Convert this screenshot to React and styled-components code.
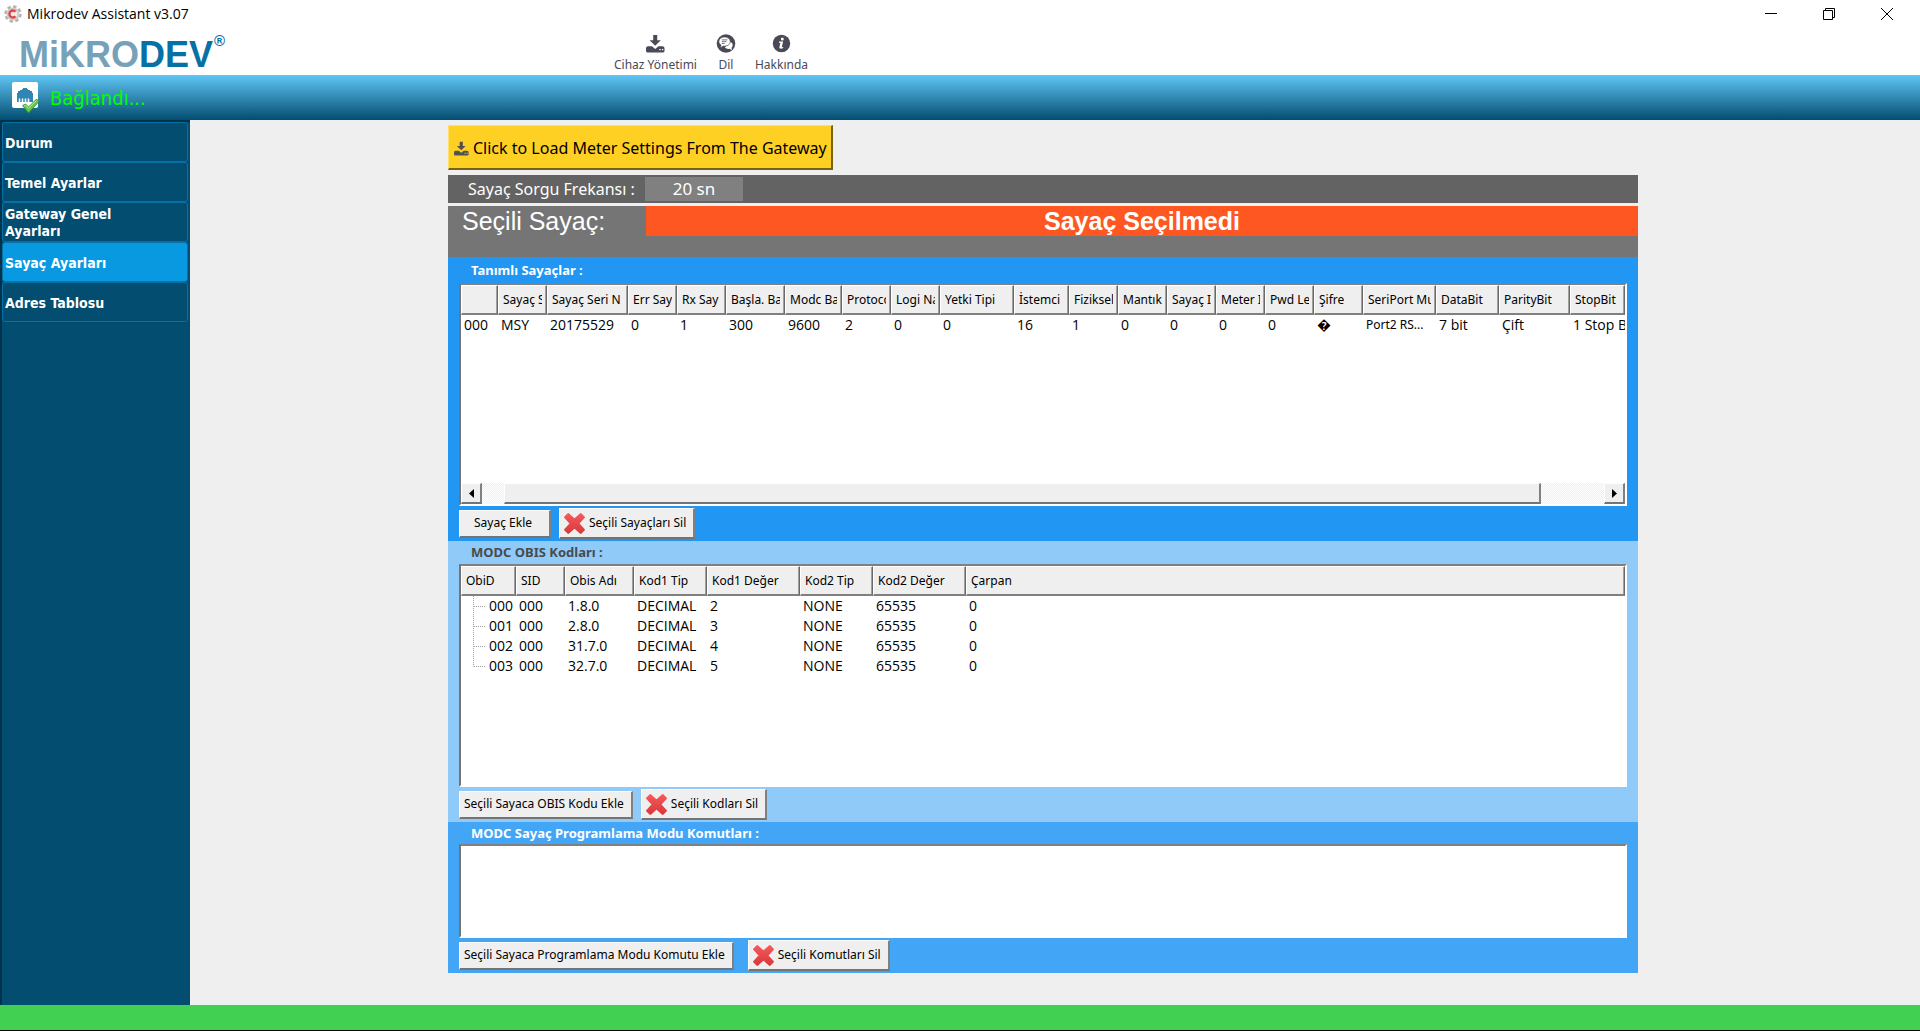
import React from "react";
import styled, { createGlobalStyle, css } from "styled-components";

const tahoma = `"DejaVu Sans Condensed", "DejaVu Sans", sans-serif`;
const noto = `"Noto Sans", "Open Sans", sans-serif`;
const segoe = `"Open Sans", "Noto Sans", sans-serif`;
const arial = `"Liberation Sans", Arial, sans-serif`;

const GlobalStyle = createGlobalStyle`
  *, *::before, *::after { box-sizing: border-box; }
  body { margin: 0; background: #efefef; font-family: ${tahoma}; }
  button, input { font: inherit; color: inherit; margin: 0; }
`;

const Window = styled.div`
  display: flex;
  flex-direction: column;
  min-height: 100vh;
`;

/* Title bar */
const TitleBar = styled.div`
  display: flex;
  align-items: center;
  height: 28px;
  padding: 0 4px;
  gap: 5px;
  background: #fff;
  color: #000;
  font: 14px/20px ${segoe};
`;
const WindowTitle = styled.span`
  flex: 1;
`;
const WindowControls = styled.div`
  display: flex;
`;
const WindowButton = styled.button`
  display: flex;
  align-items: center;
  justify-content: center;
  width: 58px;
  height: 28px;
  padding: 0;
  border: 0;
  background: none;
`;

/* Brand and toolbar */
const Header = styled.header`
  display: flex;
  align-items: flex-start;
  height: 47px;
  background: #fff;
`;
const Brand = styled.div`
  display: flex;
  width: 614px;
  padding: 7px 0 0 19px;
  font: bold 36px/40px ${arial};
  color: #76a1b9;
`;
const BrandStrong = styled.span`
  color: #0571a6;
`;
const BrandMark = styled.sup`
  padding-left: 1px;
  font: bold 15px/12px ${arial};
  color: #0571a6;
`;
const Toolbar = styled.nav`
  display: flex;
  gap: 19px;
  padding-top: 6px;
`;
const ToolButton = styled.button`
  display: flex;
  flex-direction: column;
  align-items: center;
  gap: 3px;
  padding: 0;
  border: 0;
  background: none;
  color: #4a4a57;
  font: 12px/18px ${noto};
`;

const StatusStrip = styled.div`
  display: flex;
  align-items: center;
  gap: 10px;
  height: 45px;
  padding: 1px 0 0 12px;
  background: linear-gradient(#60c6f5, #034d70);
  color: #00ff00;
  font: 20px/24px ${tahoma};
`;

/* Body */
const Body = styled.div`
  display: flex;
  flex: 1;
`;
const Sidebar = styled.nav`
  flex: none;
  width: 190px;
  padding-right: 2px;
  border: solid #02334c;
  border-width: 2px 0 0 2px;
  background: #034d70;
`;
const SideButton = styled.button`
  display: block;
  width: 100%;
  height: 40px;
  padding: 2px 72px 0 2px;
  border: 1px solid #0571a6;
  border-radius: 3px;
  background: ${(p) => (p.$active ? "#0899e0" : "#034d70")};
  color: #fff;
  font: bold 14px/17px ${tahoma};
  text-align: left;
`;
const Content = styled.main`
  flex: 1;
  min-width: 0;
  padding: 5px 282px 32px 258px;
`;
const Page = styled.div`
  display: flex;
  flex-direction: column;
`;
const LoadButton = styled.button`
  display: flex;
  align-self: flex-start;
  align-items: center;
  gap: 4px;
  height: 45px;
  padding: 2px 4px 0 5px;
  border: solid;
  border-width: 1px 2px 2px 1px;
  border-color: #ffe069 #7a6310 #7a6310 #ffe069;
  background: #ffd024;
  color: #000;
  white-space: nowrap;
  font: 16px/24px ${noto};
`;

const FrequencyBar = styled.div`
  display: flex;
  align-items: center;
  height: 28px;
  margin: 5px 0 3px;
  background: #636363;
  color: #fff;
  font: 16px/24px ${noto};
`;
const FrequencyLabel = styled.label`
  width: 197px;
  padding-left: 20px;
  white-space: nowrap;
`;
const FrequencyInput = styled.input`
  width: 98px;
  height: 24px;
  padding: 0;
  border: 0;
  background: #808080;
  text-align: center;
  font: 17px/24px ${noto};
`;
const SelectedBar = styled.div`
  display: flex;
  height: 51px;
  background: #757575;
  color: #fff;
  font: 25px/30px ${arial};
`;
const SelectedLabel = styled.label`
  width: 198px;
  padding-left: 14px;
`;
const SelectedValue = styled.output`
  flex: 1;
  height: 30px;
  background: #ff5722;
  font-weight: bold;
  text-align: center;
`;

/* Panels */
const Panel = styled.section`
  display: flex;
  flex-direction: column;
  padding: 0 11px 2px;
  background: ${(p) => p.$bg};
`;
const PanelTitle = styled.h2`
  margin: 0;
  padding: 0 12px;
  color: ${(p) => p.$color || "#fff"};
  font: bold 13px/${(p) => p.$height || 22}px ${noto};
`;
const Frame = styled.div`
  display: flex;
  flex-direction: column;
  height: ${(p) => p.$height}px;
  border: solid;
  border-width: 2px;
  border-color: #808080 #fff #fff #747474;
  background: #fff;
  overflow: hidden;
`;
const Spacer = styled.div`
  flex: 1;
`;
const Grid = styled.table`
  width: 100%;
  table-layout: fixed;
  border-collapse: separate;
  border-spacing: 0;
`;
const Col = styled.col`
  width: ${(p) => (p.$w ? p.$w + "px" : "auto")};
`;
const Head = styled.th`
  height: 30px;
  padding: 0 4px;
  border: solid;
  border-width: 1px 1px 2px 1px;
  border-color: #fff #696969 #808080 #fff;
  box-shadow: inset -1px 0 #a0a0a0;
  background: #efefef;
  text-align: left;
  font: 12px/20px ${noto};
`;
const Cell = styled.td`
  height: 20px;
  padding: 0 0 0 ${(p) => p.$pad || 3}px;
  font: 14px/20px ${segoe};
`;
const Clip = styled.span`
  display: block;
  overflow: hidden;
  white-space: nowrap;
`;
const SmallClip = styled(Clip)`
  font: 12px/20px ${noto};
`;
const TreeLabel = styled.span`
  display: flex;
  align-items: center;
  gap: 3px;
`;

const bevel = css`
  border: solid;
  border-width: 1px 2px 2px 1px;
  border-color: #fff #808080 #747474 #fff;
  background: #efefef;
`;
const ScrollBar = styled.div`
  display: grid;
  grid-template-columns: 21px 22px 1fr 63px 21px;
  height: 21px;
  background: repeating-conic-gradient(#efefef 0 25%, #fff 0 50%) 0 0 / 2px 2px;
`;
const ScrollButton = styled.button`
  ${bevel}
  display: flex;
  align-items: center;
  justify-content: center;
  padding: 0;
`;
const Thumb = styled.div`
  ${bevel}
`;

const Actions = styled.div`
  display: flex;
  align-items: center;
  gap: ${(p) => p.$gap}px;
  height: 33px;
  padding-top: 2px;
`;
const ActionButton = styled.button`
  ${bevel}
  display: flex;
  align-items: center;
  justify-content: center;
  gap: 4px;
  min-width: 92px;
  height: ${(p) => (p.$icon ? 31 : 28)}px;
  padding: 0 7px 0 4px;
  color: #000;
  white-space: nowrap;
  font: 12px/18px ${noto};
`;

const StatusBar = styled.footer`
  height: 26px;
  border-bottom: 1px solid #000;
  background: #42d052;
`;

const AppIcon = () => (
  <svg width="18" height="18" viewBox="0 0 18 18" aria-hidden="true">
    <circle cx="9" cy="9" r="7.4" fill="none" stroke="#b5b2ae" strokeWidth="2.6" strokeDasharray="3.4 2.4" />
    <circle cx="9" cy="9" r="6.6" fill="#cfcbc8" />
    <circle cx="9" cy="9" r="4.4" fill="#f7e9e7" />
    <path d="M11.500 6.600A3.500 3.500 0 1 0 11.500 11.400" fill="none" stroke="#e04545" strokeWidth="2.4" />
  </svg>
);

const DownloadIcon = ({ size = 19, color = "#4a4a57" }) => (
  <svg width={size} height={size} viewBox="0 0 19 19" fill={color} aria-hidden="true">
    <path d="M7.2 1h4v5.2h3.6L9.2 11.8 3.6 6.2h3.6z" />
    <path d="M2 12.3h4l3.2 2.6 3.2-2.6h4.1q2 0 2 2V17q0 1.4-1.4 1.4H1.4Q0 18.400 0 17v-2.7q0-2 2-2zm11.300 2.700v1.300h1.400V15zm2.600 0v1.300h1.400V15z" fillRule="evenodd" />
  </svg>
);

const LanguageIcon = () => (
  <svg width="20" height="19" viewBox="0 0 20 20" aria-hidden="true">
    <circle cx="10" cy="10" r="9.800" fill="#4a4a57" />
    <path d="M14.500 8.500q2.700.7 2.500 3.500-.2 1.700-1.300 2.500l.6 2.500-2.700-1.400q-3.200.4-4.800-1.500z" fill="#fff" />
    <path d="M8.500 3.200c3.400 0 6 2 6 4.800s-2.600 4.800-6 4.800l-1.300-.1-3 1.700.5-2.900C3.200 10.600 2.500 9.400 2.500 8c0-2.800 2.600-4.800 6-4.800z" fill="#fff" stroke="#4a4a57" strokeWidth=".7" />
    <path d="M5.500 6.200h6M5.500 8.100h5M5.500 10h3" stroke="#4a4a57" strokeWidth=".8" />
  </svg>
);

const InfoIcon = () => (
  <svg width="19" height="19" viewBox="0 0 19 19" aria-hidden="true">
    <circle cx="9.500" cy="9.500" r="8.700" fill="#4a4a57" />
    <circle cx="10.300" cy="4.900" r="1.500" fill="#fff" />
    <path d="M7 7.600h4.100l-1.300 5.600 1.500-.2-.2 1c-1.300.9-4 1.100-3.700-.7l1-4.600H6.900z" fill="#fff" />
  </svg>
);

const ConnectedIcon = () => (
  <svg width="28" height="32" viewBox="0 0 28 32" aria-hidden="true">
    <rect width="26" height="26" rx="2" fill="#fff" />
    <path d="M10 8V7h1V6h4v1h1v1h2v1h2v2h1v9H5v-9h1V9h2V8z" fill="#2f86b5" />
    <path d="M7.500 16.500V20M10.500 16.500V20M13.500 16.500V20M16.500 16.500V20" stroke="#fff" strokeWidth="1.500" />
    <path d="M10.500 23.500l3-1.500 3 3L24.500 17l2.500 2.500L16.500 31z" fill="#62c653" stroke="#2f8f2b" strokeWidth=".8" />
    <path d="M12 24l1.500-.8 3 3 8-7.800" fill="none" stroke="#b4f08e" strokeWidth="1" />
  </svg>
);

const DeleteIcon = () => (
  <svg width="21" height="21" viewBox="0 0 21 21" aria-hidden="true">
    <defs>
      <linearGradient id="cross" x1="0" y1="0" x2="0" y2="1">
        <stop offset="0" stopColor="#f4585a" />
        <stop offset="1" stopColor="#d93a3c" />
      </linearGradient>
    </defs>
    <path d="M4.300 1.300 10.500 7 16.700 1.300l3 3-5.700 6.200 5.700 6.200-3 3-6.200-5.700-6.200 5.700-3-3L7 10.500 1.300 4.300z" fill="url(#cross)" stroke="url(#cross)" strokeWidth="2.400" strokeLinejoin="round" />
  </svg>
);

const Arrow = ({ flip }) => (
  <svg width="5" height="9" viewBox="0 0 5 9" aria-hidden="true">
    <path d={flip ? "M0 0l5 4.500L0 9z" : "M5 0L0 4.500 5 9z"} />
  </svg>
);

const Branch = ({ last }) => (
  <svg width="13" height="20" viewBox="0 0 13 20" aria-hidden="true" stroke="#a0a0a0" strokeDasharray="1 1">
    <path d={last ? "M.5 0v10.500" : "M.5 0v20"} />
    <path d="M1 10.500h12" />
  </svg>
);

const menu = ["Durum", "Temel Ayarlar", "Gateway Genel Ayarları", "Sayaç Ayarları", "Adres Tablosu"];

const meterColumns = [
  ["", 37, "000"],
  ["Sayaç S", 49, "MSY"],
  ["Sayaç Seri N", 81, "20175529"],
  ["Err Sayı", 49, "0"],
  ["Rx Say", 49, "1"],
  ["Başla. Ba", 59, "300"],
  ["Modc Ba", 57, "9600"],
  ["Protocol", 49, "2"],
  ["Logi Na", 49, "0"],
  ["Yetki Tipi", 74, "0"],
  ["İstemci", 55, "16"],
  ["Fiziksel", 49, "1"],
  ["Mantıks", 49, "0"],
  ["Sayaç I", 49, "0"],
  ["Meter I", 49, "0"],
  ["Pwd Le", 49, "0"],
  ["Şifre", 49, "\uFFFD"],
  ["SeriPort Mu", 73, "Port2 RS..."],
  ["DataBit", 63, "7 bit"],
  ["ParityBit", 71, "Çift"],
  ["StopBit", 0, "1 Stop Bit"],
];

const obisColumns = [
  ["ObiD", 55],
  ["SID", 49],
  ["Obis Adı", 69],
  ["Kod1 Tip", 73],
  ["Kod1 Değer", 93],
  ["Kod2 Tip", 73],
  ["Kod2 Değer", 93],
  ["Çarpan", 0],
];

const obisRows = [
  ["000", "000", "1.8.0", "DECIMAL", "2", "NONE", "65535", "0"],
  ["001", "000", "2.8.0", "DECIMAL", "3", "NONE", "65535", "0"],
  ["002", "000", "31.7.0", "DECIMAL", "4", "NONE", "65535", "0"],
  ["003", "000", "32.7.0", "DECIMAL", "5", "NONE", "65535", "0"],
];

function GridHead({ columns }) {
  return (
    <>
      <colgroup>
        {columns.map(([name, w]) => (
          <Col key={name} $w={w} />
        ))}
      </colgroup>
      <thead>
        <tr>
          {columns.map(([name]) => (
            <Head key={name} scope="col">
              <Clip>{name}</Clip>
            </Head>
          ))}
        </tr>
      </thead>
    </>
  );
}

function PanelActions({ add, remove, gap }) {
  return (
    <Actions $gap={gap}>
      <ActionButton type="button">{add}</ActionButton>
      <ActionButton type="button" $icon>
        <DeleteIcon />
        {remove}
      </ActionButton>
    </Actions>
  );
}

export default function App() {
  return (
    <Window>
      <GlobalStyle />
      <TitleBar>
        <AppIcon />
        <WindowTitle>Mikrodev Assistant v3.07</WindowTitle>
        <WindowControls>
          <WindowButton type="button" aria-label="Minimize">
            <svg width="12" height="12" viewBox="0 0 12 12" aria-hidden="true">
              <path d="M0 5.500h12" stroke="#000" />
            </svg>
          </WindowButton>
          <WindowButton type="button" aria-label="Restore">
            <svg width="12" height="12" viewBox="0 0 12 12" fill="none" stroke="#000" aria-hidden="true">
              <path d="M.5 2.500h9v9h-9zM2.500 2.500v-2h9v9h-2" />
            </svg>
          </WindowButton>
          <WindowButton type="button" aria-label="Close">
            <svg width="12" height="12" viewBox="0 0 12 12" stroke="#000" aria-hidden="true">
              <path d="M0 0l12 12M12 0L0 12" />
            </svg>
          </WindowButton>
        </WindowControls>
      </TitleBar>

      <Header>
        <Brand>
          MiKRO<BrandStrong>DEV</BrandStrong>
          <BrandMark>®</BrandMark>
        </Brand>
        <Toolbar aria-label="Araçlar">
          <ToolButton type="button">
            <DownloadIcon />
            Cihaz Yönetimi
          </ToolButton>
          <ToolButton type="button">
            <LanguageIcon />
            Dil
          </ToolButton>
          <ToolButton type="button">
            <InfoIcon />
            Hakkında
          </ToolButton>
        </Toolbar>
      </Header>

      <StatusStrip role="status">
        <ConnectedIcon />
        Bağlandı...
      </StatusStrip>

      <Body>
        <Sidebar aria-label="Menü">
          {menu.map((item) => (
            <SideButton key={item} type="button" $active={item === "Sayaç Ayarları"}>
              {item}
            </SideButton>
          ))}
        </Sidebar>

        <Content>
          <Page>
            <LoadButton type="button">
              <DownloadIcon size={15} color="#555149" />
              Click to Load Meter Settings From The Gateway
            </LoadButton>

            <FrequencyBar>
              <FrequencyLabel htmlFor="frequency">Sayaç Sorgu Frekansı :</FrequencyLabel>
              <FrequencyInput id="frequency" type="text" defaultValue="20 sn" />
            </FrequencyBar>

            <SelectedBar>
              <SelectedLabel htmlFor="selected-meter">Seçili Sayaç:</SelectedLabel>
              <SelectedValue id="selected-meter">Sayaç Seçilmedi</SelectedValue>
            </SelectedBar>

            <Panel $bg="#2196f3">
              <PanelTitle $height={26}>Tanımlı Sayaçlar :</PanelTitle>
              <Frame $height={223}>
                <Grid>
                  <GridHead columns={meterColumns} />
                  <tbody>
                    <tr>
                      {meterColumns.map(([name, , value]) => (
                        <Cell key={name}>
                          {name === "SeriPort Mu" ? <SmallClip>{value}</SmallClip> : <Clip>{value}</Clip>}
                        </Cell>
                      ))}
                    </tr>
                  </tbody>
                </Grid>
                <Spacer />
                <ScrollBar>
                  <ScrollButton type="button" aria-label="Sola kaydır">
                    <Arrow />
                  </ScrollButton>
                  <span />
                  <Thumb />
                  <span />
                  <ScrollButton type="button" aria-label="Sağa kaydır">
                    <Arrow flip />
                  </ScrollButton>
                </ScrollBar>
              </Frame>
              <PanelActions add="Sayaç Ekle" remove="Seçili Sayaçları Sil" gap={8} />
            </Panel>

            <Panel $bg="#90caf9">
              <PanelTitle $color="#4a4a4a" $height={23}>MODC OBIS Kodları :</PanelTitle>
              <Frame $height={223}>
                <Grid>
                  <GridHead columns={obisColumns} />
                  <tbody>
                    {obisRows.map((row, r) => (
                      <tr key={row[0]}>
                        {row.map((value, c) =>
                          c === 0 ? (
                            <Cell key={c} $pad={12}>
                              <TreeLabel>
                                <Branch last={r === obisRows.length - 1} />
                                {value}
                              </TreeLabel>
                            </Cell>
                          ) : (
                            <Cell key={c}>
                              <Clip>{value}</Clip>
                            </Cell>
                          )
                        )}
                      </tr>
                    ))}
                  </tbody>
                </Grid>
              </Frame>
              <PanelActions add="Seçili Sayaca OBIS Kodu Ekle" remove="Seçili Kodları Sil" gap={8} />
            </Panel>

            <Panel $bg="#42a5f5">
              <PanelTitle>MODC Sayaç Programlama Modu Komutları :</PanelTitle>
              <Frame $height={94} />
              <PanelActions add="Seçili Sayaca Programlama Modu Komutu Ekle" remove="Seçili Komutları Sil" gap={14} />
            </Panel>
          </Page>
        </Content>
      </Body>

      <StatusBar />
    </Window>
  );
}
